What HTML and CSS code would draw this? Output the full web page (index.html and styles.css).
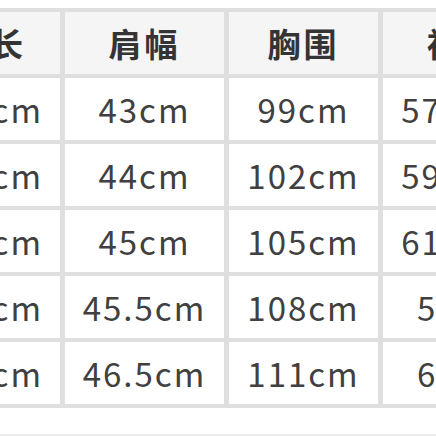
FILE: index.html
```html
<!DOCTYPE html>
<html lang="zh">
<head>
<meta charset="utf-8">
<link rel="stylesheet" href="styles.css">
</head>
<body>
<div class="page">
  <div class="table">
    <div class="cell head head-first">衣长</div>
    <div class="cell head">肩幅</div>
    <div class="cell head">胸围</div>
    <div class="cell head">袖长</div>

    <div class="cell">67cm</div>
    <div class="cell">43cm</div>
    <div class="cell">99cm</div>
    <div class="cell">57.5cm</div>

    <div class="cell">69cm</div>
    <div class="cell">44cm</div>
    <div class="cell">102cm</div>
    <div class="cell">59.5cm</div>

    <div class="cell">71cm</div>
    <div class="cell">45cm</div>
    <div class="cell">105cm</div>
    <div class="cell">61.5cm</div>

    <div class="cell">73cm</div>
    <div class="cell">45.5cm</div>
    <div class="cell">108cm</div>
    <div class="cell">58cm</div>

    <div class="cell">75cm</div>
    <div class="cell">46.5cm</div>
    <div class="cell">111cm</div>
    <div class="cell">60cm</div>
  </div>
  <div class="bottom-line"></div>
</div>
</body>
</html>
```

FILE: styles.css
```css
html, body {
  margin: 0;
  padding: 0;
  overflow: hidden;
  background: #ffffff;
}

.page {
  width: 436px;
  height: 436px;
  overflow: hidden;
  position: relative;
  display: flex;
  flex-direction: column;
}

.table {
  margin-top: 8px;
  margin-left: -71px;
  width: max-content;
  display: grid;
  grid-template-columns: 126px 159px 149px 160px;
  grid-auto-rows: 62px;
  gap: 4px 5px;
  padding: 4px 5px;
  background: #dfdfdf;
}

.cell {
  background: #ffffff;
  display: flex;
  align-items: center;
  justify-content: center;
  font-family: "Noto Sans CJK SC", "Noto Sans", sans-serif;
  font-size: 33px;
  letter-spacing: 2px;
  color: #404040;
  white-space: nowrap;
}

.head {
  background: #f5f5f5;
  font-weight: 700;
  color: #343434;
  letter-spacing: 3px;
}

.head-first {
  padding-right: 14px;
}

.bottom-line {
  margin-top: auto;
  height: 2px;
  background: #ececec;
}
```
